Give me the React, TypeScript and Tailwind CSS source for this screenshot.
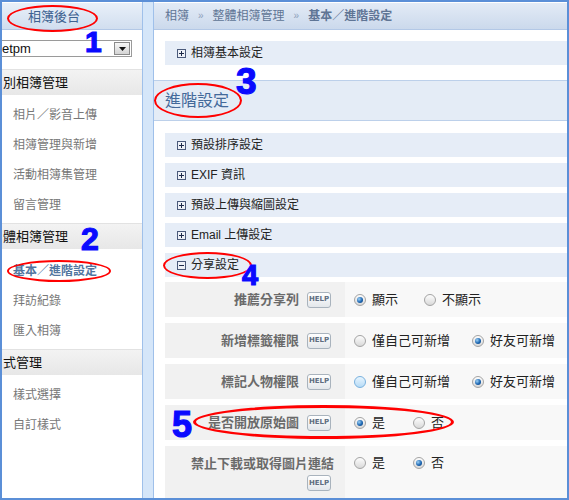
function Radio({ checked, hover }: { checked?: boolean; hover?: boolean }) {
  return (
    <span
      className={`inline-flex h-[12px] w-[12px] shrink-0 items-center justify-center rounded-full border ${
        hover
          ? "border-[#79b1de] bg-linear-to-b from-[#e8f5fe] to-[#b6dbf6]"
          : "border-[#a4a4a4] bg-linear-to-b from-[#fdfdfd] to-[#d9d9d9]"
      }`}
    >
      {checked && (
        <span className="h-[6px] w-[6px] rounded-full bg-[radial-gradient(circle_at_35%_35%,#9fd2f6,#1c66b2_55%,#0b3a72)]" />
      )}
    </span>
  );
}

function Toggle({ open }: { open?: boolean }) {
  return (
    <svg width="9" height="9" viewBox="0 0 9 9" className="shrink-0">
      <rect x="0.5" y="0.5" width="8" height="8" fill="#eef1f7" stroke="#4b5a7a" />
      <path d="M2 4.5h5" stroke="#1d2a48" />
      {!open && <path d="M4.5 2v5" stroke="#1d2a48" />}
    </svg>
  );
}

function Help({ className = "" }: { className?: string }) {
  return (
    <span
      className={`flex h-[16px] w-[24px] shrink-0 items-center justify-center rounded-[3px] border border-[#a9b3bd] bg-linear-to-b from-white to-[#e3e7eb] font-['DejaVu_Sans',sans-serif] text-[7px] font-bold leading-none text-[#5f6e80] ${className}`}
    >
      HELP
    </span>
  );
}

function Option({ label, checked, hover, w }: { label: string; checked?: boolean; hover?: boolean; w: string }) {
  return (
    <label className={`flex items-center gap-[6px] ${w}`}>
      <Radio checked={checked} hover={hover} />
      <span className="text-[13px] leading-none text-[#222]">{label}</span>
    </label>
  );
}

const sections = ["預設排序設定", "EXIF 資訊", "預設上傳與縮圖設定", "Email 上傳設定"];

const settings = [
  { label: "推薦分享列", opts: [["顯示", true], ["不顯示", false]], w: ["w-[70px]", ""] },
  { label: "新增標籤權限", opts: [["僅自己可新增", false], ["好友可新增", true]], w: ["w-[118px]", ""] },
  { label: "標記人物權限", opts: [["僅自己可新增", false], ["好友可新增", true]], w: ["w-[118px]", ""], hover: true },
  { label: "是否開放原始圖", opts: [["是", true], ["否", false]], w: ["w-[59px]", ""] },
];

function SideHead({ text }: { text: string }) {
  return (
    <div className="flex h-[26px] items-center whitespace-nowrap border-t border-[#e2e2e2] bg-linear-to-b from-[#f3f3f3] to-[#e7e7e7] pl-[1px]">
      <span className="text-[13px] leading-none text-[#111]">{text}</span>
    </div>
  );
}

function SideItem({ text, active }: { text: string; active?: boolean }) {
  return (
    <div
      className={`flex h-[30px] items-center pl-[11px] text-[12px] leading-none ${
        active ? "font-bold text-[#52769f]" : "text-[#777]"
      }`}
    >
      {text}
    </div>
  );
}

const num = "absolute font-bold leading-none text-[#0a0aff] [-webkit-text-stroke:1.2px_#0a0aff]";

export default function App() {
  return (
    <div className="relative h-[500px] w-[569px] overflow-hidden font-['Liberation_Sans','Noto_Sans_CJK_TC',sans-serif]">
      <div className="flex h-full border-2 border-[#5b8fd7] bg-[#d5e6f9]">
        {/* sidebar */}
        <aside className="w-[141px] shrink-0 overflow-hidden border-r border-[#9fc0ea] bg-white">
          <div className="flex h-[28px] items-center border-t border-white border-b border-b-[#b3c8e6] bg-linear-to-b from-[#e9f0f9] to-[#d1deef] pl-[26px]">
            <span className="text-[13px] leading-none text-[#3e6291]">相簿後台</span>
          </div>
          <div className="h-[39px] pt-[10px]">
            <div className="flex h-[17px] w-[130px] items-center justify-between border border-[#9a9a9a] border-l-0 bg-white">
              <span className="text-[13px] leading-none text-[#111]">etpm</span>
              <span className="mr-[1px] flex h-[13px] w-[16px] items-center justify-center border border-[#8a8a8a] bg-linear-to-b from-[#f6f6f6] to-[#d4d4d4]">
                <svg width="7" height="4" viewBox="0 0 7 4">
                  <path d="M0 0h7L3.5 4z" fill="#111" />
                </svg>
              </span>
            </div>
          </div>
          <SideHead text="別相簿管理" />
          <div className="pt-[5px] pb-[3px]">
            <SideItem text="相片／影音上傳" />
            <SideItem text="相簿管理與新增" />
            <SideItem text="活動相簿集管理" />
            <SideItem text="留言管理" />
          </div>
          <SideHead text="體相簿管理" />
          <div className="pt-[7px] pb-[3px]">
            <SideItem text="基本／進階設定" active />
            <SideItem text="拜訪紀錄" />
            <SideItem text="匯入相簿" />
          </div>
          <SideHead text="式管理" />
          <div className="pt-[5px]">
            <SideItem text="樣式選擇" />
            <SideItem text="自訂樣式" />
          </div>
        </aside>

        {/* main */}
        <main className="ml-[10px] flex min-w-0 flex-1 flex-col border-l border-[#9fc0ea] bg-white">
          <div className="flex h-[28px] shrink-0 items-center gap-[9px] border-t border-white border-b border-b-[#b3c8e6] bg-linear-to-b from-[#e3ebf6] to-[#cbd9ec] pl-[11px] text-[12px] leading-none text-[#5f7595]">
            <span>相簿</span>
            <span className="text-[10px] text-[#8ea0bb]">»</span>
            <span>整體相簿管理</span>
            <span className="text-[10px] text-[#8ea0bb]">»</span>
            <span className="font-bold">基本／進階設定</span>
          </div>

          <div className="pt-[11px] pb-[15px] pl-[11px]">
            <div className="flex h-[24px] items-center gap-[5px] bg-[#e6edf7] pl-[12px]">
              <Toggle />
              <span className="text-[12px] leading-none text-[#222]">相簿基本設定</span>
            </div>
          </div>

          <div className="flex h-[41px] shrink-0 items-center border-y border-[#bcd0ea] bg-[#e4ecf6] pl-[11px]">
            <span className="text-[16px] leading-none text-[#43699a]">進階設定</span>
          </div>

          <div className="flex flex-1 flex-col gap-[6px] pt-[12px] pl-[11px]">
            {sections.map((s) => (
              <div key={s} className="flex h-[24px] shrink-0 items-center gap-[5px] bg-[#e6edf7] pl-[12px]">
                <Toggle />
                <span className="text-[12px] leading-none text-[#222]">{s}</span>
              </div>
            ))}
            <div className="flex h-[24px] shrink-0 items-center gap-[5px] bg-[#e6edf7] pl-[12px]">
              <Toggle open />
              <span className="text-[12px] leading-none text-[#222]">分享設定</span>
            </div>

            <div className="-mt-[1px] flex flex-1 flex-col gap-[6px]">
              {settings.map((r) => (
                <div key={r.label} className="flex h-[35px] shrink-0">
                  <div className="flex w-[180px] items-center justify-end gap-[8px] bg-[#f1f1f1] pr-[14px]">
                    <span className="text-[13px] font-bold leading-none text-[#6a6a6a]">{r.label}</span>
                    <Help />
                  </div>
                  <div className="flex flex-1 items-center bg-[#f8f8f8] pl-[9px]">
                    {r.opts.map(([t, c], i) => (
                      <Option key={t as string} label={t as string} checked={c as boolean} hover={r.hover && i === 0} w={r.w[i]} />
                    ))}
                  </div>
                </div>
              ))}
              <div className="flex flex-1">
                <div className="flex w-[180px] flex-col items-end gap-[5px] bg-[#f1f1f1] pt-[11px] pr-[11px]">
                  <span className="text-[13px] font-bold leading-none text-[#6a6a6a]">禁止下載或取得圖片連結</span>
                  <Help className="mr-[3px]" />
                </div>
                <div className="flex flex-1 items-start bg-[#f8f8f8] pt-[10px] pl-[9px]">
                  <Option label="是" w="w-[59px]" />
                  <Option label="否" checked w="" />
                </div>
              </div>
            </div>
          </div>
        </main>
      </div>

      {/* annotations */}
      <div className="absolute left-[7px] top-[5px] h-[27px] w-[91px] rounded-[50%] border-2 border-[#ff0000]" />
      <div className="absolute left-[7px] top-[260px] h-[22px] w-[104px] rounded-[50%] border-2 border-[#ff0000]" />
      <div className="absolute left-[154px] top-[83px] h-[35px] w-[88px] rounded-[50%] border-2 border-[#ff0000]" />
      <div className="absolute left-[163px] top-[252px] h-[27px] w-[89px] rounded-[50%] border-2 border-[#ff0000]" />
      <div className="absolute left-[193px] top-[405px] h-[34px] w-[261px] rounded-[50%] border-[3px] border-[#ff0000]" />

      <span className={`${num} left-[85px] top-[27px] text-[30px]`}>1</span>
      <span className={`${num} left-[81px] top-[223px] text-[32px]`}>2</span>
      <span className={`${num} left-[236px] top-[63px] text-[37px]`}>3</span>
      <span className={`${num} left-[242px] top-[261px] text-[29px]`}>4</span>
      <span className={`${num} left-[172px] top-[407px] text-[36px]`}>5</span>
    </div>
  );
}
